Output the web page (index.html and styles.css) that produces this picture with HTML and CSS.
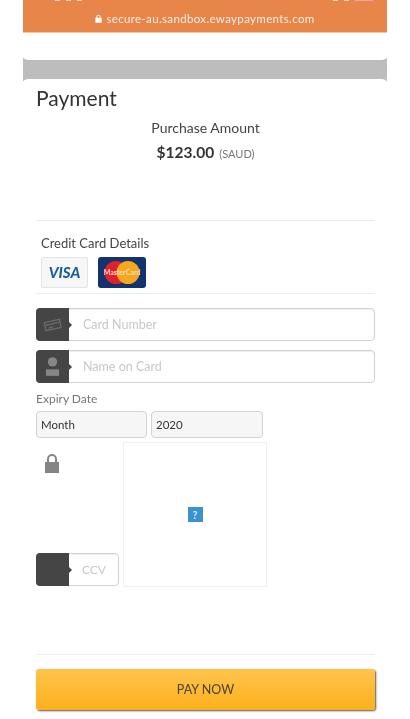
FILE: index.html
```html
<!DOCTYPE html>
<html lang="en">
<head>
    <meta charset="UTF-8">
    <title>Payment</title>
    <link rel="stylesheet" href="styles.css">
</head>
<body>
<div class="phone">
    <div class="address-bar">
        <div class="status-row">
            <span class="status-left"><i></i><i></i><i></i></span>
            <span class="status-right"><i></i><i></i><i class="battery"></i></span>
        </div>
        <div class="address">
            <svg class="address-lock" viewBox="0 0 10 12" width="7" height="9"><path d="M2 5V3.500a3 3 0 0 1 6 0V5h1.500v7H.5V5zM3.300 5h3.400V3.500a1.700 1.700 0 0 0-3.400 0z" fill="#fff"/></svg>
            <span>secure-au.sandbox.ewaypayments.com</span>
        </div>
    </div>

    <div class="sheet-bg">
        <div class="sheet-top"></div>
        <div class="sheet-cap"></div>
    </div>

    <div class="content">
        <h1 class="title">Payment</h1>
        <div class="amount-label">Purchase Amount</div>
        <div class="amount"><strong>$123.00</strong> <small>(SAUD)</small></div>
        <hr class="divider divider-amount">

        <div class="details-title">Credit Card Details</div>
        <div class="card-logos">
            <div class="logo-visa">VISA</div>
            <div class="logo-mc">
                <svg viewBox="0 0 48 31" width="48" height="31">
                    <circle cx="18" cy="15.500" r="11.500" fill="#e2202c"/>
                    <circle cx="30" cy="15.500" r="11.500" fill="#f5a81c"/>
                </svg>
                <span>MasterCard</span>
            </div>
        </div>
        <hr class="divider divider-cards">

        <div class="field">
            <div class="field-icon">
                <svg viewBox="0 0 20 14" width="19" height="14"><g fill="none" stroke="#6a6a6a" stroke-width="1.500"><path d="M1.500 4.500 17.500 1l1.500 8.500-16 3.500z"/><path d="M2.500 7.500l15-3.500M6 10l5-1"/></g></svg>
            </div>
            <span class="placeholder">Card Number</span>
        </div>
        <div class="field">
            <div class="field-icon">
                <svg viewBox="0 0 16 24" width="15" height="23"><circle cx="8" cy="7" r="5" fill="#858585"/><rect x="1" y="15" width="14" height="7" fill="#858585"/></svg>
            </div>
            <span class="placeholder">Name on Card</span>
        </div>

        <div class="expiry-label">Expiry Date</div>
        <div class="expiry-row">
            <div class="select select-month">Month</div>
            <div class="select select-year">2020</div>
        </div>

        <div class="ccv-row">
            <div class="ccv-col">
                <svg class="ccv-lock" viewBox="0 0 16 20" width="16" height="20"><path d="M3 9V6a5 5 0 0 1 10 0v3h2v11H1V9zM5 9h6V6a3 3 0 0 0-6 0z" fill="#858585"/></svg>
                <div class="field field-ccv">
                    <div class="field-icon"></div>
                    <span class="placeholder">CCV</span>
                </div>
            </div>
            <div class="frame-box"><span class="missing-image">?</span></div>
        </div>

        <hr class="divider divider-pay">
        <button class="pay-button">PAY NOW</button>
    </div>
</div>
</body>
</html>
```

FILE: styles.css
```css
body {
    margin: 0;
    background-color: white;
    color: #3a3a3a;
    font-family: 'Lato', 'Open Sans', sans-serif;
}
.phone {
    width: 364px;
    height: 719px;
    margin-left: 23px;
    overflow: hidden;
    filter: blur(0.6px);
}
.address-bar {
    height: 33px;
    background-color: #e8864a;
    border-bottom: 1px solid #f5c6a5;
    box-sizing: border-box;
    color: white;
}
.status-row {
    display: flex;
    justify-content: space-between;
    height: 2px;
    padding: 0 14px 0 32px;
}
.status-row span {
    display: flex;
    gap: 6px;
}
.status-row i {
    width: 5px;
    height: 1px;
    background-color: #f8dcc8;
}
.status-row i.battery {
    width: 18px;
    background-color: #f0a9a0;
}
.address {
    display: flex;
    justify-content: center;
    align-items: center;
    gap: 4px;
    margin-top: 10px;
    font-size: 11.500px;
    letter-spacing: 0.35px;
    color: #fbeee5;
}
.sheet-bg {
    background-color: #bdbdbd;
}
.sheet-top {
    height: 27px;
    background-color: white;
    border-radius: 0 0 6px 6px / 0 0 3px 3px;
}
.sheet-cap {
    height: 4px;
    margin-top: 19px;
    background-color: white;
    border-radius: 6px 6px 0 0 / 3px 3px 0 0;
}
.content {
    padding: 0 12px 0 13px;
}
.title {
    margin: 3px 0 0;
    font-size: 21px;
    font-weight: 400;
    line-height: 24px;
    color: #333;
}
.amount-label {
    margin-top: 10px;
    text-align: center;
    font-size: 14px;
    line-height: 16px;
    color: #444;
}
.amount {
    margin-top: 6px;
    text-align: center;
    line-height: 20px;
}
.amount strong {
    font-size: 15.500px;
    color: #333;
}
.amount small {
    font-size: 11px;
    color: #777;
    margin-left: 1px;
}
.divider {
    margin: 0;
    border: none;
    height: 1px;
    background-color: #ececec;
}
.divider-amount {
    margin-top: 56px;
}
.details-title {
    margin: 14px 0 0 5px;
    font-size: 13px;
    line-height: 16px;
    color: #444;
}
.card-logos {
    display: flex;
    gap: 10px;
    margin: 6px 0 0 5px;
}
.logo-visa {
    width: 47px;
    height: 31px;
    box-sizing: border-box;
    border: 1px solid #e4e4e4;
    border-radius: 2px;
    background-color: #f7f7f7;
    text-align: center;
    font-size: 15px;
    font-weight: 900;
    font-style: italic;
    line-height: 29px;
    color: #1f5f9e;
}
.logo-mc {
    position: relative;
    width: 48px;
    height: 31px;
    border-radius: 3px;
    background-color: #13336f;
    overflow: hidden;
}
.logo-mc span {
    position: absolute;
    left: 0;
    right: 0;
    top: 11px;
    text-align: center;
    font-size: 7px;
    font-weight: 700;
    line-height: 9px;
    color: #f6d9c8;
}
.divider-cards {
    margin-top: 5px;
}
.field {
    display: flex;
    align-items: center;
    height: 33px;
    box-sizing: border-box;
    margin-top: 9px;
    border: 1px solid #d2d2d2;
    border-radius: 4px;
    background-color: white;
    box-shadow: inset 0 1px 1px #eee;
}
.divider-cards + .field {
    margin-top: 14px;
}
.field-icon {
    position: relative;
    display: flex;
    justify-content: center;
    align-items: center;
    flex: none;
    width: 33px;
    height: 33px;
    margin: -1px 0 -1px -1px;
    border-radius: 4px 0 0 4px;
    background-color: #454545;
}
.field-icon::after {
    content: '';
    position: absolute;
    right: -3px;
    top: 14px;
    border-left: 3px solid #454545;
    border-top: 3px solid transparent;
    border-bottom: 3px solid transparent;
}
.placeholder {
    margin-left: 14px;
    font-size: 12.500px;
    color: #c8c8c8;
}
.expiry-label {
    margin-top: 8px;
    font-size: 12px;
    line-height: 16px;
    color: #777;
}
.expiry-row {
    display: flex;
    gap: 4px;
    margin-top: 4px;
}
.select {
    height: 27px;
    box-sizing: border-box;
    padding-left: 4px;
    border: 1px solid #d2d2d2;
    border-radius: 4px;
    background-color: #f6f6f6;
    font-size: 11.500px;
    line-height: 25px;
    color: #333;
}
.select-month {
    width: 111px;
}
.select-year {
    width: 112px;
}
.ccv-row {
    display: flex;
    gap: 4px;
    margin-top: 4px;
}
.ccv-col {
    display: flex;
    flex-direction: column;
    justify-content: space-between;
    width: 83px;
    height: 145px;
}
.ccv-lock {
    margin: 11px 0 0 8px;
}
.field-ccv {
    margin: 0 0 1px;
}
.field-ccv .placeholder {
    margin-left: 13px;
    font-size: 12px;
}
.frame-box {
    display: flex;
    justify-content: center;
    align-items: center;
    width: 144px;
    height: 145px;
    box-sizing: border-box;
    border: 1px solid #f0f0f0;
}
.missing-image {
    width: 15px;
    height: 15px;
    background-color: #3a93d0;
    text-align: center;
    font-size: 11px;
    font-weight: 700;
    line-height: 15px;
    color: #d5e9f6;
}
.divider-pay {
    margin-top: 67px;
}
.pay-button {
    display: block;
    width: 100%;
    height: 41px;
    margin-top: 14px;
    border: none;
    border-radius: 3px;
    background: linear-gradient(#ffc44c, #fdb01c);
    box-shadow: 1px 1px 2px #555;
    font-family: 'Lato', 'Open Sans', sans-serif;
    font-size: 12.500px;
    color: #4a4433;
}
```
